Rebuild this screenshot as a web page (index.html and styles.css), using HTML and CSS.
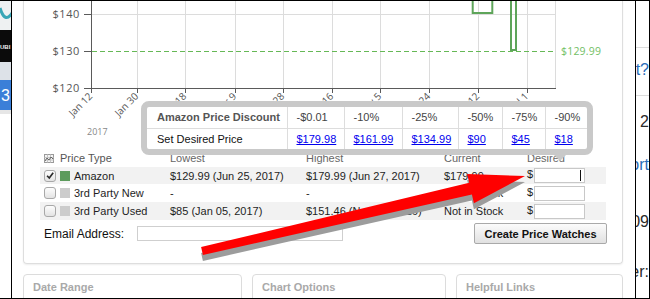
FILE: index.html
```html
<!DOCTYPE html>
<html>
<head>
<meta charset="utf-8">
<title>Price History</title>
<link rel="stylesheet" href="styles.css">
</head>
<body>
<div class="screen">
  <div class="side-left">
    <svg width="11" height="297" viewBox="0 1 11 297">
      <rect x="0" y="1" width="11" height="30" fill="#eef1f2"/>
      <path d="M0 8 Q5 24 12 13" stroke="#39a6b6" stroke-width="3" fill="none"/>
      <rect x="0" y="30" width="11" height="32" fill="#0b0b0b"/>
      <text x="0" y="49" class="ubi">UBI</text>
      <rect x="0" y="62" width="11" height="18" fill="#dde2e8"/>
      <rect x="0" y="80" width="11" height="30" fill="#3b7fd8"/>
      <text x="1" y="101" class="three">3</text>
      <rect x="0" y="110" width="11" height="4" fill="#e6e6e6"/>
    </svg>
  </div>

  <div class="page">
    <div class="panel">
      <svg class="chart" width="598" height="146" viewBox="24 1 598 146">
        <g class="grid">
          <path d="M91 14.5H555"/>
          <path d="M137.5 0V88M185.5 0V88M235.5 0V88M283.5 0V88M332.5 0V88M380.5 0V88M429.5 0V88M478.5 0V88M527.5 0V88M555.5 0V88"/>
        </g>
        <path class="target" d="M92 51.5H555"/>
        <rect class="bar" x="472.7" y="-10" width="19.6" height="23"/>
        <rect class="bar" x="511" y="-10" width="5" height="60"/>
        <g class="axis">
          <path d="M91.5 0V88.5H556"/>
          <path d="M84 14.5H91M84 51.5H91M84 88.5H91"/>
          <path d="M91.5 88V93M137.5 88V93M185.5 88V93M235.5 88V93M283.5 88V93M332.5 88V93M380.5 88V93M429.5 88V93M478.5 88V93M527.5 88V93"/>
        </g>
        <text class="ylab" x="80" y="18">$140</text>
        <text class="ylab" x="80" y="55">$130</text>
        <text class="ylab" x="80" y="92">$120</text>
        <text class="tlab" x="561" y="55">$129.99</text>
        <text class="xlab" transform="translate(93 97) rotate(-45)">Jan 12</text>
        <text class="xlab" transform="translate(139 97) rotate(-45)">Jan 30</text>
        <text class="xlab" transform="translate(187 97) rotate(-45)">Feb 18</text>
        <text class="xlab" transform="translate(237 97) rotate(-45)">Mar 9</text>
        <text class="xlab" transform="translate(285 97) rotate(-45)">Mar 28</text>
        <text class="xlab" transform="translate(334 97) rotate(-45)">Apr 16</text>
        <text class="xlab" transform="translate(382 97) rotate(-45)">May 5</text>
        <text class="xlab" transform="translate(431 97) rotate(-45)">May 24</text>
        <text class="xlab" transform="translate(480 97) rotate(-45)">Jun 12</text>
        <text class="xlab" transform="translate(529 97) rotate(-45)">Jul 1</text>
        <text class="year" x="87" y="135">2017</text>
      </svg>

      <div class="tip">
        <table>
          <colgroup>
            <col style="width:140px"><col style="width:57px"><col style="width:58px"><col style="width:56px"><col style="width:44px"><col style="width:43px"><col style="width:42px">
          </colgroup>
          <tr class="tip-head">
            <td class="tip-label">Amazon Price Discount</td>
            <td>-$0.01</td><td>-10%</td><td>-25%</td><td>-50%</td><td>-75%</td><td>-90%</td>
          </tr>
          <tr>
            <td class="tip-first">Set Desired Price</td>
            <td><a href="#">$179.98</a></td><td><a href="#">$161.99</a></td><td><a href="#">$134.99</a></td><td><a href="#">$90</a></td><td><a href="#">$45</a></td><td><a href="#">$18</a></td>
          </tr>
        </table>
      </div>

      <table class="prices">
        <colgroup>
          <col style="width:126px"><col style="width:136px"><col style="width:138px"><col style="width:83px"><col style="width:83px">
        </colgroup>
        <tr class="head">
          <th><span class="type"><svg class="ico" width="10" height="9" viewBox="0 0 10 9"><rect x=".5" y=".5" width="9" height="8" fill="#f4f4f4" stroke="#9a9a9a"/><path d="M3.5 .5v8M6.5 .5v8M.5 3.5h9M.5 6h9" stroke="#c4c4c4"/><path d="M1 7 3 4 5 6 7 3 9 5" stroke="#666" fill="none"/></svg>Price Type</span></th>
          <th>Lowest</th><th>Highest</th><th>Current</th><th>Desired</th>
        </tr>
        <tr class="alt r17">
          <td><span class="type"><span class="cb"><svg width="11" height="11" viewBox="0 0 11 11"><path d="M2.3 5.8 4.7 8.3 9 2.4" stroke="#2a2a2a" stroke-width="1.8" fill="none"/></svg></span><span class="sw green"></span>Amazon</span></td>
          <td>$129.99 (Jun 25, 2017)</td><td>$179.99 (Jun 27, 2017)</td><td>$179.99</td>
          <td><span class="want"><span class="cur">$</span><span class="field"><input type="text" class="in"><span class="caret"></span></span></span></td>
        </tr>
        <tr>
          <td><span class="type"><span class="cb"></span><span class="sw"></span>3rd Party New</span></td>
          <td>-</td><td>-</td><td>Not in Stock</td>
          <td><span class="want"><span class="cur">$</span><span class="field"><input type="text" class="in"></span></span></td>
        </tr>
        <tr class="alt">
          <td><span class="type"><span class="cb"></span><span class="sw"></span>3rd Party Used</span></td>
          <td>$85 (Jan 05, 2017)</td><td>$151.46 (Nov 08, 2016)</td><td>Not in Stock</td>
          <td><span class="want"><span class="cur">$</span><span class="field"><input type="text" class="in"></span></span></td>
        </tr>
      </table>

      <div class="email">
        <label class="email-label">Email Address:</label>
        <input type="text" class="email-in">
        <button class="btn">Create Price Watches</button>
      </div>
    </div>

    <div class="boxes">
      <div class="box">
        <div class="box-title">Date Range</div>
        <div class="box-line">1 Month 3 Months 6 Months</div>
      </div>
      <div class="box">
        <div class="box-title">Chart Options</div>
        <div class="box-line opts"><span>Show Lines</span><span class="mini-cb"></span></div>
      </div>
      <div class="box">
        <div class="box-title">Helpful Links</div>
        <div class="box-line"><a href="#">View Product on Amazon</a></div>
      </div>
    </div>
  </div>

  <div class="side-right">
    <div class="rule r1"></div>
    <div class="frag link f1">ebay alert?</div>
    <div class="rule r2"></div>
    <div class="frag f2">Rank: 2</div>
    <div class="frag link f3">Sort</div>
    <div class="frag f4">2009</div>
    <div class="frag f5">Manufacturer:</div>
  </div>

  <svg class="arrow" width="650" height="299" viewBox="0 0 650 299">
    <defs>
      <filter id="soft" x="-5%" y="-20%" width="110%" height="140%"><feGaussianBlur stdDeviation="0.7"/></filter>
    </defs>
    <polygon class="arrow-shadow" filter="url(#soft)" transform="translate(0 6)" points="201.1,247.1 469.2,182.8 467.1,174 525,176 473.9,203.2 471.9,194.4 202.9,254.9"/>
    <polygon class="arrow-body" points="201.1,247.1 469.2,182.8 467.1,174 525,176 473.9,203.2 471.9,194.4 202.9,254.9"/>
  </svg>
</div>
</body>
</html>
```

FILE: styles.css
```css
* { box-sizing: border-box; }

html, body {
  margin: 0;
  padding: 0;
  background: #fff;
}

body {
  font-family: "Liberation Sans", Arial, sans-serif;
  font-size: 11px;
  color: #1e1e1e;
}

.screen {
  position: relative;
  width: 650px;
  height: 299px;
  display: flex;
  overflow: hidden;
  border-top: 1px solid #000;
  border-right: 1px solid #000;
  border-bottom: 1px solid #000;
}

/* background window strip */
.side-left {
  flex: none;
  width: 12px;
  border-right: 1px solid #000;
  overflow: hidden;
}
.side-left svg { display: block; }
.ubi { font: bold 6px "Liberation Sans", sans-serif; fill: #f0f0f0; }
.three { font: 16px "Liberation Sans", sans-serif; fill: #fff; }

/* main page */
.page {
  flex: none;
  width: 624px;
  border-right: 1px solid #000;
  padding-left: 11px;
  overflow: hidden;
}

.panel {
  position: relative;
  width: 600px;
  border: 1px solid #dedede;
  border-top: none;
  border-radius: 0 0 4px 4px;
  box-shadow: 0 1px 2px rgba(0, 0, 0, 0.07);
  padding-bottom: 19px;
}

.chart { display: block; }
.chart .grid path { stroke: #dcdcdc; stroke-width: 1; fill: none; }
.chart .axis path { stroke: #5a5a5a; stroke-width: 1; fill: none; }
.chart .target { stroke: #66b856; stroke-width: 1.2; stroke-dasharray: 5 3; fill: none; }
.chart .bar { fill: none; stroke: #5ea55a; stroke-width: 2; }
.chart .ylab {
  font-family: "Open Sans", sans-serif;
  font-size: 11px;
  letter-spacing: 0.6px;
  fill: #555;
  text-anchor: end;
}
.chart .tlab {
  font-family: "Open Sans", sans-serif;
  font-size: 10.5px;
  letter-spacing: 0.2px;
  fill: #72c064;
}
.chart .xlab {
  font-family: "Open Sans", sans-serif;
  font-size: 10px;
  fill: #555;
  text-anchor: end;
}
.chart .year {
  font-family: "Open Sans", sans-serif;
  font-size: 9px;
  fill: #888;
}

/* discount tooltip */
.tip {
  position: absolute;
  left: 117px;
  top: 100px;
  z-index: 2;
  background: #fff;
  border: 6px solid #c9c9c9;
  border-radius: 8px;
}
.tip::after {
  content: "";
  position: absolute;
  left: 407px;
  top: calc(100% + 6px);
  border: 6px solid transparent;
  border-top-color: #c9c9c9;
}
.tip table {
  width: 440px;
  table-layout: fixed;
  border-collapse: collapse;
  border-style: hidden;
}
.tip td {
  height: 21px;
  padding: 0 0 0 9px;
  border: 1px solid #dddddd;
  white-space: nowrap;
  color: #444;
}
.tip .tip-label {
  padding-left: 10px;
  font-weight: bold;
  color: #555;
}
.tip .tip-first {
  padding-left: 10px;
  color: #111;
}
.tip a { color: #0000ee; }

/* price table */
.prices {
  margin: 2px 0 0 16px;
  width: 566px;
  table-layout: fixed;
  border-collapse: collapse;
}
.prices th,
.prices td {
  height: 18px;
  padding: 0 0 0 4px;
  text-align: left;
  white-space: nowrap;
  vertical-align: middle;
  overflow: hidden;
}
.prices th {
  font-weight: normal;
  color: #666;
}
.prices tr.r17 td { height: 17px; }
.prices tr.alt td { background: #f2f2f2; }

.type {
  display: flex;
  align-items: center;
  gap: 4px;
}
.head .type { color: #555; }
.ico { display: block; margin-right: 2px; }

.cb {
  flex: none;
  width: 12px;
  height: 12px;
  border: 1px solid #a8a8a8;
  border-radius: 3px;
  background: linear-gradient(#fdfdfd, #e3e3e3);
  display: flex;
  align-items: center;
  justify-content: center;
}
.cb svg { display: block; }

.sw {
  flex: none;
  width: 10px;
  height: 10px;
  background: #cccccc;
}
.sw.green { background: #5c9b5c; }

.want {
  display: flex;
  align-items: flex-start;
  gap: 1px;
}
.cur {
  line-height: 12px;
  color: #222;
}
.field {
  position: relative;
  display: block;
}
.in {
  display: block;
  width: 51px;
  height: 15px;
  margin: 0;
  padding: 0;
  border: 1px solid #c8c8c8;
  background: #fff;
  font: inherit;
}
.caret {
  position: absolute;
  right: 4px;
  top: 2px;
  width: 1px;
  height: 11px;
  background: #111;
}

/* email row */
.email {
  display: flex;
  align-items: center;
  height: 21px;
  margin: 3px 15px 0 20px;
}
.email-label {
  width: 93px;
  font-size: 12px;
  color: #111;
}
.email-in {
  width: 206px;
  height: 15px;
  margin: 0;
  padding: 0;
  border: 1px solid #cfcfcf;
  background: #fff;
}
.btn {
  margin-left: auto;
  width: 133px;
  height: 21px;
  padding: 0;
  border: 1px solid #a9a9a9;
  border-radius: 2px;
  background: linear-gradient(#fbfbfb, #e1e1e1);
  font-family: "Liberation Sans", Arial, sans-serif;
  font-size: 11px;
  font-weight: bold;
  color: #111;
}

/* lower boxes */
.boxes {
  display: grid;
  grid-template-columns: 219px 194px 167px;
  gap: 10px;
  margin-top: 10px;
}
.box {
  height: 40px;
  border: 1px solid #dcdcdc;
  border-radius: 4px;
  padding: 6px 0 0 9px;
  overflow: hidden;
}
.box-title {
  font-size: 11px;
  font-weight: bold;
  line-height: 13px;
  color: #a9a9a9;
}
.box-line {
  margin-top: 3px;
  line-height: 13px;
  color: #111;
  white-space: nowrap;
}
.box-line a { color: #1a3fc4; text-decoration: none; }
.opts {
  display: flex;
  align-items: flex-start;
  justify-content: space-between;
  padding-right: 12px;
}
.mini-cb {
  width: 12px;
  height: 12px;
  margin-top: 1px;
  border: 1px solid #a8a8a8;
  border-radius: 3px;
  background: #f8f8f8;
}

/* background window strip (right) */
.side-right {
  flex: 1;
  overflow: hidden;
  font-size: 16px;
  color: #2b2b2b;
}
.rule {
  height: 1px;
  background: #dcdcdc;
}
.r1 { margin-top: 46px; }
.r2 { margin-top: 16px; }
.frag {
  display: flex;
  justify-content: flex-end;
  height: 18px;
  line-height: 18px;
  white-space: nowrap;
  overflow: hidden;
}
.frag.link { color: #2a6cb8; }
.f1 { margin-top: 13px; }
.f2 { margin-top: 17px; }
.f3 { margin-top: 25px; }
.f4 { margin-top: 39px; }
.f5 { margin-top: 32px; }

/* annotation arrow */
.arrow {
  position: absolute;
  left: 0;
  top: -1px;
  z-index: 5;
  pointer-events: none;
}
.arrow-body { fill: #ff0000; }
.arrow-shadow { fill: #9c9c9c; }
```
